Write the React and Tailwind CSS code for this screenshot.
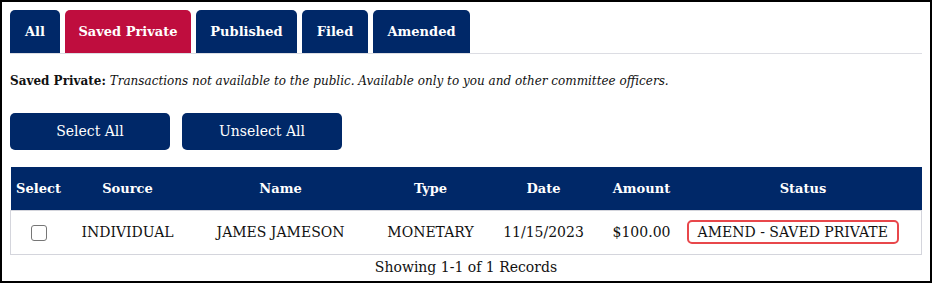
import React, { useState } from 'react';

const tabs = [
  { label: 'All', w: 'w-[50px]' },
  { label: 'Saved Private', w: 'w-[126px]' },
  { label: 'Published', w: 'w-[101px]' },
  { label: 'Filed', w: 'w-[66px]' },
  { label: 'Amended', w: 'w-[97px]' },
];

const rows = [
  { id: 1, source: 'INDIVIDUAL', name: 'JAMES JAMESON', type: 'MONETARY', date: '11/15/2023', amount: '$100.00', status: 'AMEND - SAVED PRIVATE' },
];

export default function App() {
  const [active, setActive] = useState('Saved Private');
  const [selected, setSelected] = useState({});

  const setAll = (val) => {
    const next = {};
    rows.forEach(r => { next[r.id] = val; });
    setSelected(next);
  };

  return (
    <div className="w-[932px] h-[283px] border-2 border-black bg-white px-2 pt-2 font-['Georgia','DejaVu_Serif',serif] text-[#111]">
      {/* Tabs */}
      <div className="flex gap-[5px] border-b border-[#dcdde3]">
        {tabs.map(tab => (
          <button
            key={tab.label}
            onClick={() => setActive(tab.label)}
            className={tab.w + " h-[43px] rounded-t-[5px] text-white text-[13px] font-bold " + (active === tab.label ? 'bg-[#bf0d3e]' : 'bg-[#002868]')}
          >
            {tab.label}
          </button>
        ))}
      </div>

      <p className="mt-[19px] text-[12px] leading-[16px]">
        <span className="font-bold">Saved Private:</span>{' '}
        <span className="italic">Transactions not available to the public. Available only to you and other committee officers.</span>
      </p>

      {/* Actions */}
      <div className="flex gap-3 mt-[24px]">
        <button onClick={() => setAll(true)} className="w-[160px] h-[37px] rounded-[5px] bg-[#002868] text-white text-[14px]">Select All</button>
        <button onClick={() => setAll(false)} className="w-[160px] h-[37px] rounded-[5px] bg-[#002868] text-white text-[14px]">Unselect All</button>
      </div>

      {/* Table */}
      <table className="mt-[17px] w-[912px] table-fixed border-collapse text-[14px]">
        <thead>
          <tr className="bg-[#002868] text-white h-[43px] text-[13px]">
            <th className="w-[56px] font-bold">Select</th>
            <th className="w-[122px] font-bold">Source</th>
            <th className="w-[184px] font-bold">Name</th>
            <th className="w-[116px] font-bold">Type</th>
            <th className="w-[110px] font-bold">Date</th>
            <th className="w-[86px] font-bold">Amount</th>
            <th className="font-bold">Status</th>
          </tr>
        </thead>
        <tbody>
          {rows.map(r => (
            <tr key={r.id} className="h-[44px] border border-[#d4d5dc] text-center">
              <td>
                <input
                  type="checkbox"
                  checked={!!selected[r.id]}
                  onChange={e => setSelected(s => ({ ...s, [r.id]: e.target.checked }))}
                  className="appearance-none w-[16px] h-[16px] border border-[#767676] rounded-[3px] align-middle checked:bg-[#002868]"
                />
              </td>
              <td>{r.source}</td>
              <td>{r.name}</td>
              <td>{r.type}</td>
              <td>{r.date}</td>
              <td>{r.amount}</td>
              <td>
                <span className="inline-block mr-[20px] px-[9px] py-[2px] border-2 border-[#e8474b] rounded-[5px] leading-[16px]">{r.status}</span>
              </td>
            </tr>
          ))}
        </tbody>
      </table>
      <div className="text-center text-[14px] mt-[2px]">Showing 1-1 of 1 Records</div>
    </div>
  );
}
